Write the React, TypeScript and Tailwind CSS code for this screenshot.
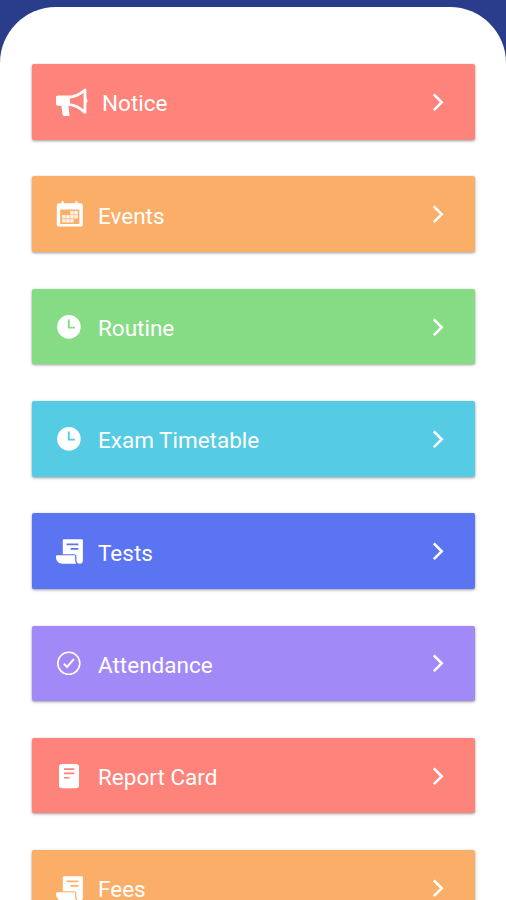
import type { ReactNode } from "react"

function MegaphoneIcon() {
  return (
    <svg className="size-8" viewBox="0 0 32 32" fill="currentColor">
      <path d="M2.6 9.6H13.4V19.8H12.4l1.1 9.2a1 1 0 0 1-1 1.1H8.6a2.2 2.2 0 0 1-2.1-1.7L5.4 19.8H2.6A3 3 0 0 1-.4 16.8V12.6a3 3 0 0 1 3-3Z" />
      <path
        d="M12.6 11.2C18.6 11 24.6 7.9 29 4V26.4C24.6 22.2 18.6 18.9 12.6 18.3Z"
        fill="none"
        stroke="currentColor"
        strokeWidth="2.8"
        strokeLinejoin="round"
      />
      <path d="M30 12.2a2.8 2.8 0 0 1 0 5Z" />
    </svg>
  )
}

function CalendarIcon() {
  return (
    <svg className="size-7" viewBox="0 0 28 28" fill="none">
      <path
        fill="currentColor"
        fillRule="evenodd"
        d="M3 3.2H5.6V2.2a1.1 1.1 0 0 1 2.2 0V3.2H19.4V2.2a1.1 1.1 0 0 1 2.2 0V3.2H24.6a2.2 2.2 0 0 1 2.2 2.2V24.4a2.2 2.2 0 0 1-2.2 2.2H3A2.2 2.2 0 0 1 .8 24.4V5.4A2.2 2.2 0 0 1 3 3.2ZM4.2 9.6V23.9H23.3V9.6Z"
      />
      <g fill="currentColor" fillOpacity="0.85">
        <path d="M14.2 11h3.5v3.4h-3.5zM18.3 11h3.5v3.4h-3.5z" />
        <path d="M6.2 15.1h3.5v3.4H6.2zM10.2 15.1h3.5v3.4h-3.5zM14.2 15.1h3.5v3.4h-3.5zM18.3 15.1h3.5v3.4h-3.5z" />
        <path d="M6.2 19.2h3.5v3.4H6.2zM10.2 19.2h3.5v3.4h-3.5zM14.2 19.2h3.5v3.4h-3.5z" />
      </g>
    </svg>
  )
}

function ClockIcon() {
  return (
    <svg className="size-7" viewBox="0 0 28 28" fill="currentColor">
      <path fillRule="evenodd" d="M12.9 2.1a11.8 11.8 0 1 0 0 23.6 11.8 11.8 0 0 0 0-23.6ZM11.8 6.6h1.9v7.2h5.2v1.8H11.8Z" />
    </svg>
  )
}

function ScrollIcon() {
  return (
    <svg className="size-7" viewBox="0 0 28 28" fill="currentColor">
      <path
        fillRule="evenodd"
        d="M7.7 2.2H26a.9.9 0 0 1 .9.9V23.4c0 2-1.2 3.3-3 3.3-2.2 0-3.5-1.5-3.5-3.4v-3.4c0-1.6-.9-2.6-2.4-2.6H6.8V3.1a.9.9 0 0 1 .9-.9ZM10.6 6.5V8.3H22.4V6.5ZM14.6 11V12.8H22.4V11Z"
      />
      <path d="M1 18.2H18.2c.6 0 .9.4.9 1v3.9c0 1.4.4 2.6 1.3 3.6H6.4C2.2 26.7-.1 23.7-.1 19.3a1.1 1.1 0 0 1 1.1-1.1Z" />
    </svg>
  )
}

function CheckIcon() {
  return (
    <svg className="size-7" viewBox="0 0 28 28" fill="none" stroke="currentColor">
      <circle cx="12.8" cy="14.3" r="11" strokeWidth="1.6" />
      <path d="M7.8 14.6l3.2 3.4 6.9-7.8" strokeWidth="2" />
    </svg>
  )
}

function ReportIcon() {
  return (
    <svg className="size-7" viewBox="0 0 28 28" fill="currentColor">
      <path
        fillRule="evenodd"
        d="M6 2H20a3 3 0 0 1 3 3V23.3a3 3 0 0 1-3 3H6a3 3 0 0 1-3-3V5A3 3 0 0 1 6 2ZM8 6.3V7.9H18.4V6.3ZM8 10.6V12.2H18.4V10.6ZM8 14.9V16.5H13.4V14.9Z"
      />
    </svg>
  )
}

type MenuItem = {
  label: string
  color: string
  icon: ReactNode
}

const MENU: MenuItem[] = [
  { label: "Notice", color: "bg-[#fe837b]", icon: <MegaphoneIcon /> },
  { label: "Events", color: "bg-[#fbae68]", icon: <CalendarIcon /> },
  { label: "Routine", color: "bg-[#86dc85]", icon: <ClockIcon /> },
  { label: "Exam Timetable", color: "bg-[#55cbe4]", icon: <ClockIcon /> },
  { label: "Tests", color: "bg-[#5a74f2]", icon: <ScrollIcon /> },
  { label: "Attendance", color: "bg-[#a18af8]", icon: <CheckIcon /> },
  { label: "Report Card", color: "bg-[#fe837b]", icon: <ReportIcon /> },
  { label: "Fees", color: "bg-[#fbae68]", icon: <ScrollIcon /> },
]

function MenuCard({ label, color, icon }: MenuItem) {
  return (
    <button
      className={`flex h-[75.6px] w-full shrink-0 items-center rounded-[2px] pl-6 pr-[30.5px] text-white shadow-[0_1px_3px_rgba(0,0,0,0.4)] ${color}`}
    >
      {icon}
      <span className="ml-3.5 pt-[3px] text-[22.5px] leading-7">{label}</span>
      <svg className="ml-auto h-5 w-3.5" viewBox="0 0 14 20" fill="none" stroke="currentColor" strokeWidth="2.6">
        <path d="M2.8 2.4l7.9 7.9-7.9 7.9" />
      </svg>
    </button>
  )
}

export default function App() {
  return (
    <div className="h-[900px] overflow-hidden bg-[#2a3d8b] pt-[7px] font-[Roboto,sans-serif]">
      <main className="flex h-[893px] flex-col gap-[36.7px] overflow-hidden rounded-t-[56px] bg-white pl-8 pr-[31px] pt-[57.2px]">
        {MENU.map(item => (
          <MenuCard key={item.label} {...item} />
        ))}
      </main>
    </div>
  )
}
